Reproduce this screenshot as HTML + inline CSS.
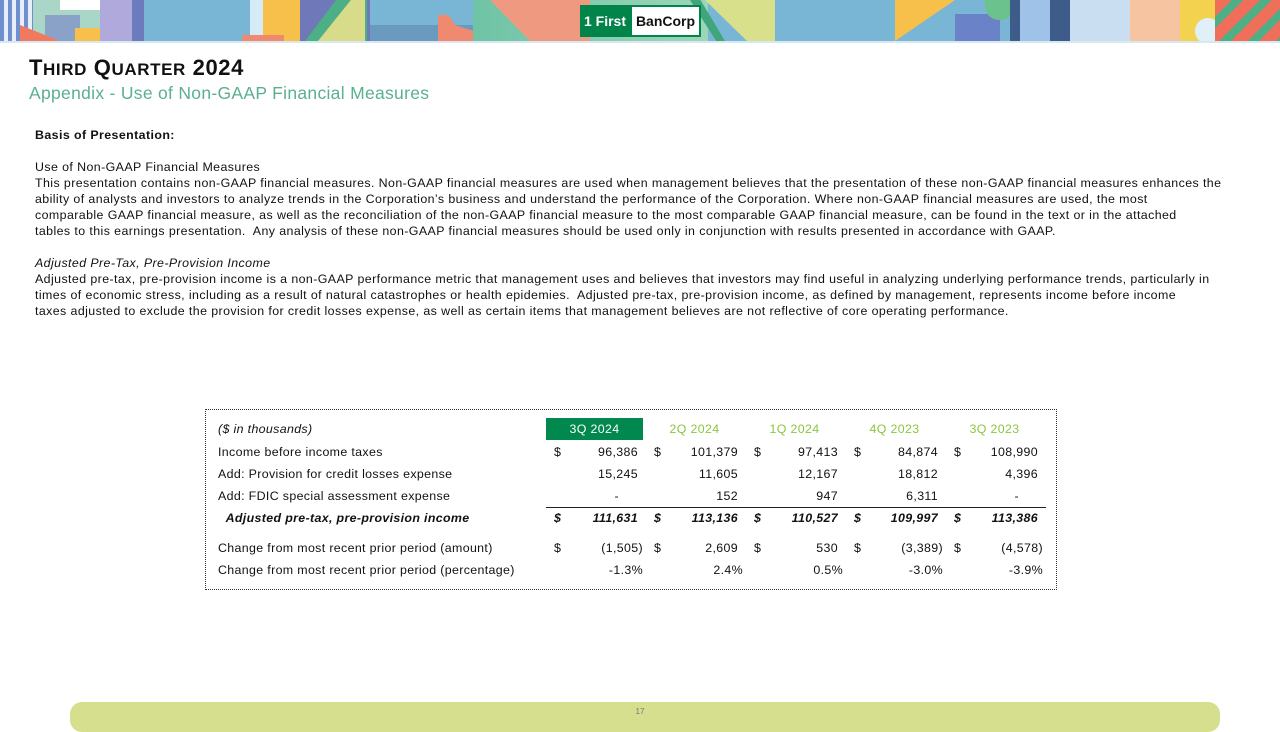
<!DOCTYPE html>
<html><head><meta charset="utf-8"><style>
*{margin:0;padding:0;box-sizing:border-box}
body{width:1280px;height:720px;overflow:hidden;background:#fff;font-family:"Liberation Sans",sans-serif;color:#111;position:relative}
.a{position:absolute}
.t{position:absolute;white-space:nowrap;font-size:12.4px;left:35px;letter-spacing:0.41px}
.r{position:absolute;white-space:nowrap;font-size:12.4px;letter-spacing:0.35px}
</style></head><body>
<!-- banner -->
<div class="a" style="left:0;top:0;width:1280px;height:41px;background:#79b6d6;overflow:hidden">
<div class="a" style="left:0;top:0;width:33px;height:41px;background:repeating-linear-gradient(90deg,#6f8fcf 0 4px,#e8eef8 4px 8px)"></div>
<div class="a" style="left:33px;top:0;width:70px;height:41px;background:#a9d6c7"></div>
<div class="a" style="left:60px;top:0;width:40px;height:10px;background:#fff"></div>
<div class="a" style="left:45px;top:15px;width:35px;height:26px;background:#8aa2c8"></div>
<div class="a" style="left:20px;top:25px;width:40px;height:16px;background:#ef7a5f;clip-path:polygon(0 0,100% 100%,0 100%)"></div>
<div class="a" style="left:75px;top:28px;width:25px;height:13px;background:#f7c04a"></div>
<div class="a" style="left:100px;top:0;width:32px;height:41px;background:#b0a9dc"></div>
<div class="a" style="left:132px;top:0;width:12px;height:41px;background:#6b7bbd"></div>
<div class="a" style="left:250px;top:0;width:14px;height:36px;background:#d6ebf5"></div>
<div class="a" style="left:263px;top:0;width:37px;height:41px;background:#f7c04a"></div>
<div class="a" style="left:242px;top:35px;width:42px;height:6px;background:#ef8a70"></div>
<div class="a" style="left:300px;top:0;width:70px;height:41px;background:#6f78b8"></div>
<div class="a" style="left:305px;top:0;width:62px;height:41px;background:#4caf86;clip-path:polygon(50% 0,100% 0,100% 100%,0 100%)"></div>
<div class="a" style="left:318px;top:0;width:47px;height:41px;background:#d8dc8a;clip-path:polygon(70% 0,100% 0,100% 100%,0 100%)"></div>
<div class="a" style="left:370px;top:25px;width:110px;height:16px;background:#6a9ac0"></div>
<div class="a" style="left:438px;top:15px;width:35px;height:26px;background:#ef8a70;clip-path:polygon(0 0,30% 0,50% 40%,100% 60%,100% 100%,0 100%)"></div>
<div class="a" style="left:473px;top:0;width:235px;height:41px;background:linear-gradient(90deg,#6fc3a6,#9cd6b8)"></div>
<div class="a" style="left:490px;top:0;width:100px;height:41px;background:#ef9a80;clip-path:polygon(0 0,100% 0,100% 100%,40% 100%)"></div>
<div class="a" style="left:705px;top:0;width:70px;height:41px;background:#d9e08c;clip-path:polygon(0 0,100% 0,100% 100%,60% 100%)"></div>
<div class="a" style="left:690px;top:0;width:35px;height:41px;background:#3fa67c;clip-path:polygon(0 0,30% 0,100% 100%,75% 100%)"></div>
<div class="a" style="left:895px;top:0;width:60px;height:41px;background:#f7c04a"></div>
<div class="a" style="left:895px;top:0;width:60px;height:41px;background:#79b6d6;clip-path:polygon(0 100%,100% 0,100% 100%)"></div>
<div class="a" style="left:955px;top:14px;width:45px;height:27px;background:#6a82c8"></div>
<div class="a" style="left:985px;top:0;width:30px;height:20px;background:#6cc28c;border-radius:0 0 14px 14px"></div>
<div class="a" style="left:1010px;top:0;width:60px;height:41px;background:#3d5c8a"></div>
<div class="a" style="left:1020px;top:0;width:30px;height:41px;background:#9fc3e8"></div>
<div class="a" style="left:1070px;top:0;width:60px;height:41px;background:#c9def0"></div>
<div class="a" style="left:1130px;top:0;width:55px;height:41px;background:#f6c4a0"></div>
<div class="a" style="left:1180px;top:0;width:50px;height:41px;background:#f3d24f"></div>
<div class="a" style="left:1195px;top:18px;width:26px;height:26px;background:#dff0f8;border-radius:50%"></div>
<div class="a" style="left:1215px;top:0;width:65px;height:41px;background:repeating-linear-gradient(135deg,#ef6f5a 0 12px,#4caf86 12px 20px)"></div>
<div class="a" style="left:580px;top:5px;width:50px;height:32px;background:#00844a;color:#fff;font-weight:bold;font-size:14px;line-height:32px;text-align:center">1 First</div>
<div class="a" style="left:630px;top:5px;width:71px;height:32px;background:#fff;border:2px solid #00844a;color:#111;font-weight:bold;font-size:14px;line-height:28px;text-align:center">BanCorp</div>
</div>
<div class="a" style="left:0;top:41px;width:1280px;height:2px;background:#d8e8f0"></div>

<div class="a" style="left:29px;top:55px;font-size:22px;font-weight:bold;color:#111;white-space:nowrap;letter-spacing:0.6px">T<span style="font-size:17px">HIRD</span> Q<span style="font-size:17px">UARTER</span> 2024</div>
<div class="a" style="left:29px;top:83px;font-size:17.5px;color:#5bb08e;white-space:nowrap;letter-spacing:0.3px">Appendix - Use of Non-GAAP Financial Measures</div>

<div class="t" style="top:128px;font-weight:bold">Basis of Presentation:</div>
<div class="t" style="top:160px">Use of Non-GAAP Financial Measures</div>
<div class="t" style="top:176px">This presentation contains non-GAAP financial measures. Non-GAAP financial measures are used when management believes that the presentation of these non-GAAP financial measures enhances the</div>
<div class="t" style="top:192px">ability of analysts and investors to analyze trends in the Corporation’s business and understand the performance of the Corporation. Where non-GAAP financial measures are used, the most</div>
<div class="t" style="top:208px">comparable GAAP financial measure, as well as the reconciliation of the non-GAAP financial measure to the most comparable GAAP financial measure, can be found in the text or in the attached</div>
<div class="t" style="top:224px">tables to this earnings presentation.&nbsp; Any analysis of these non-GAAP financial measures should be used only in conjunction with results presented in accordance with GAAP.</div>
<div class="t" style="top:256px;font-style:italic">Adjusted Pre-Tax, Pre-Provision Income</div>
<div class="t" style="top:272px">Adjusted pre-tax, pre-provision income is a non-GAAP performance metric that management uses and believes that investors may find useful in analyzing underlying performance trends, particularly in</div>
<div class="t" style="top:288px">times of economic stress, including as a result of natural catastrophes or health epidemies.&nbsp; Adjusted pre-tax, pre-provision income, as defined by management, represents income before income</div>
<div class="t" style="top:304px">taxes adjusted to exclude the provision for credit losses expense, as well as certain items that management believes are not reflective of core operating performance.</div>

<!-- table -->
<div class="a" style="left:205px;top:409px;width:852px;height:181px;border:1px dotted #333"></div>
<div class="a" style="left:546px;top:418px;width:97px;height:22px;background:#00884e"></div>
<div class="a" style="left:546px;top:507px;width:500px;height:1px;background:#222"></div>
<div id="tb"></div>
<script>
var rows=[
 [422,"<i>($ in thousands)</i>",null],
 [445,"Income before income taxes",[["$","96,386"],["$","101,379"],["$","97,413"],["$","84,874"],["$","108,990"]]],
 [467,"Add: Provision for credit losses expense",[["","15,245"],["","11,605"],["","12,167"],["","18,812"],["","4,396"]]],
 [489,"Add: FDIC special assessment expense",[["","-&nbsp;&nbsp;&nbsp;&nbsp;&nbsp;"],["","152"],["","947"],["","6,311"],["","-&nbsp;&nbsp;&nbsp;&nbsp;&nbsp;"]]],
 [511,"&nbsp;&nbsp;<b><i>Adjusted pre-tax, pre-provision income</i></b>",[["$","111,631"],["$","113,136"],["$","110,527"],["$","109,997"],["$","113,386"]],1],
 [541,"Change from most recent prior period (amount)",[["$","(1,505)"],["$","2,609"],["$","530"],["$","(3,389)"],["$","(4,578)"]]],
 [563,"Change from most recent prior period (percentage)",[["","-1.3%"],["","2.4%"],["","0.5%"],["","-3.0%"],["","-3.9%"]]]
];
var h="";var heads=["3Q 2024","2Q 2024","1Q 2024","4Q 2023","3Q 2023"];
for(var i=0;i<5;i++){h+='<div class="r" style="left:'+(546+i*100)+'px;top:422px;width:97px;text-align:center;color:'+(i?'#8cc63f':'#fff')+'">'+heads[i]+'</div>';}
rows.forEach(function(r){
 h+='<div class="r" style="left:218px;top:'+r[0]+'px">'+r[1]+'</div>';
 if(r[2])r[2].forEach(function(c,i){
  var pad=(c[1].indexOf(')')>=0||c[1].indexOf('%')>=0)?0:5;
  var st=r[3]?'font-weight:bold;font-style:italic;':'';
  h+='<div class="r" style="'+st+'left:'+(554+i*100)+'px;top:'+r[0]+'px">'+c[0]+'</div>';
  h+='<div class="r" style="'+st+'left:'+(560+i*100)+'px;width:'+(83-pad)+'px;text-align:right;top:'+r[0]+'px">'+c[1]+'</div>';
 });
});
document.getElementById('tb').innerHTML=h;
</script>

<div class="a" style="left:70px;top:702px;width:1150px;height:30px;background:#d5df8e;border-radius:12px"></div>
<div class="a" style="left:620px;top:707px;width:40px;text-align:center;font-size:8px;color:#777">17</div>
</body></html>
